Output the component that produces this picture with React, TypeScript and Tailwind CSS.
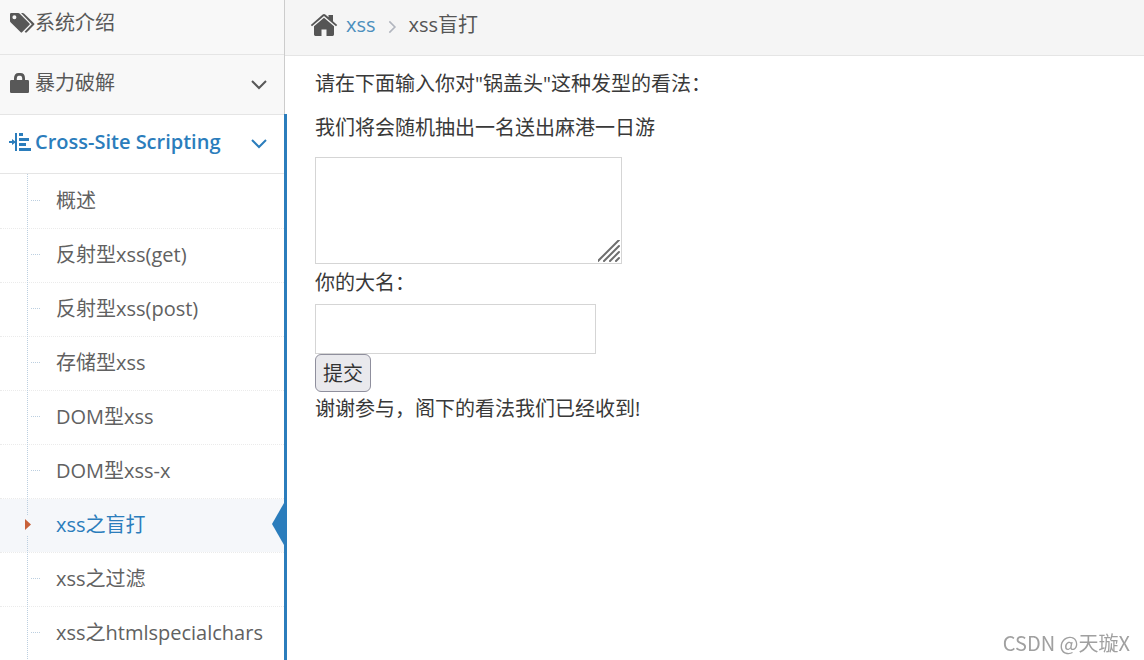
import clsx from "clsx";

const LESSONS = [
  "概述",
  "反射型xss(get)",
  "反射型xss(post)",
  "存储型xss",
  "DOM型xss",
  "DOM型xss-x",
  "xss之盲打",
  "xss之过滤",
  "xss之htmlspecialchars",
];
const CURRENT = "xss之盲打";

function TagsIcon() {
  return (
    <svg className="h-5 w-[25px] shrink-0" viewBox="0 0 25 20" fill="currentColor" aria-hidden="true">
      <path
        fillRule="evenodd"
        d="M0 1.2Q0 0 1.2 0H8.2Q9 0 9.8.8L19.5 10.4Q20.2 11 19.5 11.7L12 19.3Q11.4 20 10.7 19.3L.8 9.5Q0 8.7 0 8ZM4.4 2.3a2 2 0 1 0 0 4 2 2 0 0 0 0-4Z"
      />
      <path d="M11 0H12.7Q13.4 0 14 .6L24.2 10.6Q24.8 11.2 24.2 11.8L16.8 19.3Q16 20 15.2 19.3L14.6 18.7 21.8 11.2Z" />
    </svg>
  );
}

function LockIcon() {
  return (
    <svg className="h-5 w-[25px] shrink-0" viewBox="0 0 25 20" aria-hidden="true">
      <path d="M5.4 8.5V5.3Q5.4 1.4 8.6 1.4H10.4Q13.6 1.4 13.6 5.3V8.5" fill="none" stroke="currentColor" strokeWidth="2.8" />
      <rect x="0" y="7" width="19" height="13" rx="1.2" fill="currentColor" />
    </svg>
  );
}

function AlignIcon() {
  return (
    <svg
      className="h-5 w-[25px] shrink-0 overflow-visible"
      viewBox="0 0 25 20"
      fill="currentColor"
      aria-hidden="true"
    >
      <path d="M-1 9H2V7L6 10 2 13V11H-1ZM5 1H7V19H5ZM9 1H13V4H9ZM9 6H19V9H9ZM9 11H16V14H9ZM9 16H21V19H9Z" />
    </svg>
  );
}

function HomeIcon() {
  return (
    <svg className="h-[22px] w-7 shrink-0" viewBox="0 0 28 22" fill="currentColor" aria-hidden="true">
      <path d="M14 0Q14.7 0 15.3.5L18.5 3.3V1H23V7.2L27.2 10.9 26 12.3 14 2.1 2 12.3.8 10.9 12.7.5Q13.3 0 14 0Z" />
      <path d="M14 3.8 24 12.2V20.6Q24 22 22.6 22H16.5V15.5H11.5V22H5.4Q4 22 4 20.6V12.2Z" />
    </svg>
  );
}

function Chevron({ className }: { className?: string }) {
  return (
    <svg className={className} viewBox="0 0 16 10" fill="none" stroke="currentColor" strokeWidth="2" aria-hidden="true">
      <path d="M1 1 8 8 15 1" />
    </svg>
  );
}

function Sidebar() {
  return (
    <nav className="w-[285px] shrink-0 border-r border-[#cccccc] bg-[#f8f8f8] text-[#585858]">
      <ul className="flex min-h-screen flex-col">
        <li className="border-b border-[#e5e5e5]">
          <a href="#intro" className="flex h-[54px] items-center pb-2 pl-[10px]">
            <TagsIcon />
            系统介绍
          </a>
        </li>
        <li className="border-b border-[#e5e5e5]">
          <a href="#brute" className="flex h-[59px] items-center pr-[17px] pb-1 pl-[10px]">
            <LockIcon />
            <span className="flex-1">暴力破解</span>
            <Chevron className="mt-1 h-[10px] w-4" />
          </a>
        </li>
        <li className="relative flex-1 bg-white">
          <a
            href="#xss"
            className="flex h-[59px] items-center border-b border-[#e5e5e5] pr-[17px] pb-1 pl-[10px] font-semibold text-[#2b7dbc]"
          >
            <AlignIcon />
            <span className="flex-1">Cross-Site Scripting</span>
            <Chevron className="mt-1 h-[10px] w-4" />
          </a>
          <Lessons />
          <span className="absolute -top-px -right-[3px] bottom-0 w-[3px] bg-[#2b7dbc]" />
        </li>
      </ul>
    </nav>
  );
}

function Lessons() {
  return (
    <ul className="relative pt-px text-[#616161]">
      {/* tree guide running behind every lesson */}
      <span className="absolute top-0 bottom-0 left-[27px] z-10 border-l border-dotted border-[#bccfe0]" />
      {LESSONS.map((name) => {
        const active = name === CURRENT;
        return (
          <li key={name} className="relative border-b border-dotted border-[#ebebeb]">
            <a
              href={"#" + name}
              className={clsx("flex h-[53px] items-center pb-0.5 pl-[56px]", active && "bg-[#f5f7fa] text-[#2b7dbc]")}
            >
              {name}
            </a>
            {active ? (
              <>
                <svg className="absolute top-4 left-6 z-20 h-5 w-2 bg-[#f5f7fa]" viewBox="0 0 8 20" aria-hidden="true">
                  <path d="M1 4 7 9.500 1 15Z" fill="#c86139" />
                </svg>
                <svg className="absolute top-1 right-0 h-[42px] w-3" viewBox="0 0 12 42" aria-hidden="true">
                  <path d="M12 0V42L0 21Z" fill="#2b7dbc" />
                </svg>
              </>
            ) : (
              <span className="absolute top-[25px] left-[31px] w-[9px] border-t border-dotted border-[#bccfe0]" />
            )}
          </li>
        );
      })}
    </ul>
  );
}

function Breadcrumb() {
  return (
    <nav className="flex h-14 items-center border-b border-[#e5e5e5] bg-[#f5f5f5] pb-1.5 pl-[25px] text-[#555555]">
      <HomeIcon />
      <a href="#xss" className="ml-2 text-[#4c8fbd]">
        xss
      </a>
      <Chevron className="mx-[10px] mt-1 h-2 w-[13px] -rotate-90 text-[#b2b6bf]" />
      <span>xss盲打</span>
    </nav>
  );
}

function OpinionForm() {
  return (
    <form className="flex flex-col items-start pt-[13px] pl-[30px] leading-[29px] text-[#393939]">
      <label htmlFor="opinion" className="mb-[15px]">
        请在下面输入你对"锅盖头"这种发型的看法：
      </label>
      <p className="mb-[15px]">我们将会随机抽出一名送出麻港一日游</p>
      <div className="relative">
        <textarea id="opinion" className="block h-[107px] w-[307px] resize-none border border-[#d5d5d5] px-2 py-1" />
        <svg
          className="pointer-events-none absolute right-[2px] bottom-[2px] size-[22px]"
          viewBox="0 0 22 22"
          stroke="#6e6e6e"
          strokeWidth="2"
          strokeLinecap="round"
          aria-hidden="true"
        >
          <path d="M0 21 21 0M6 21 21 6M12 21 21 12M18 21 21 18" />
        </svg>
      </div>
      <label htmlFor="name" className="mt-1 mb-[7px]">
        你的大名：
      </label>
      <input id="name" type="text" className="h-[50px] w-[281px] border border-[#d5d5d5] px-2" />
      <button type="button" className="h-[38px] rounded-md border border-[#8f8f9d] bg-[#e9e9ed] px-[7px] text-black/80">
        提交
      </button>
      <p className="mt-0.5">谢谢参与，阁下的看法我们已经收到!</p>
    </form>
  );
}

export default function App() {
  return (
    <div className="flex h-screen overflow-hidden bg-white font-['Open_Sans','Noto_Sans_CJK_SC',sans-serif] text-[20px] leading-[30px]">
      <Sidebar />
      <main className="min-w-0 flex-1">
        <Breadcrumb />
        <OpinionForm />
      </main>
      <footer className="fixed right-[14px] bottom-0.5 font-['Noto_Sans_CJK_SC',sans-serif] text-[#a0a0a0]">
        CSDN @天璇X
      </footer>
    </div>
  );
}
